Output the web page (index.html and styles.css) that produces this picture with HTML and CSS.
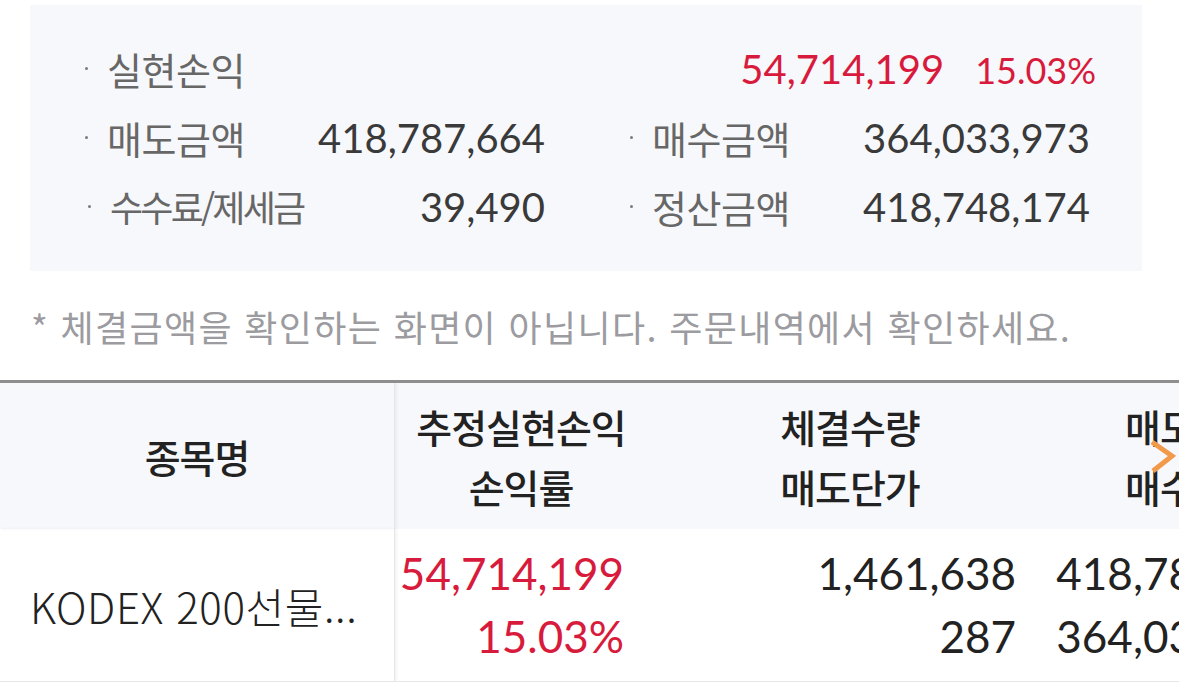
FILE: index.html
```html
<!DOCTYPE html>
<html lang="ko">
<head>
<meta charset="utf-8">
<title>실현손익</title>
<link rel="stylesheet" href="styles.css">
</head>
<body>
<section class="summary">
  <div class="row top">
    <div class="label"><span class="dot"></span>실현손익</div>
    <div class="vals"><span class="num red">54,714,199</span><span class="pct red">15.03%</span></div>
  </div>
  <div class="grid">
    <div class="cell"><div class="label"><span class="dot"></span>매도금액</div><div class="num">418,787,664</div></div>
    <div class="cell"><div class="label"><span class="dot"></span>매수금액</div><div class="num">364,033,973</div></div>
    <div class="cell"><div class="label shift"><span class="dot"></span>수수료/제세금</div><div class="num">39,490</div></div>
    <div class="cell"><div class="label"><span class="dot"></span>정산금액</div><div class="num">418,748,174</div></div>
  </div>
</section>
<p class="note">* 체결금액을 확인하는 화면이 아닙니다. 주문내역에서 확인하세요.</p>
<div class="table">
  <div class="th c1"><span>종목명</span></div>
  <div class="th c2"><span>추정실현손익</span><span>손익률</span></div>
  <div class="th c3"><span>체결수량</span><span>매도단가</span></div>
  <div class="th c4"><span>매도금액</span><span>매수금액</span></div>
  <div class="td c1 name">KODEX 200선물...</div>
  <div class="td c2 red"><span>54,714,199</span><span>15.03%</span></div>
  <div class="td c3"><span>1,461,638</span><span>287</span></div>
  <div class="td c4"><span>418,787,664</span><span>364,033,973</span></div>
  <svg class="more" width="30" height="38" viewBox="0 0 30 38"><polyline points="6,4 26,18 7,33" fill="none" stroke="#f29a4c" stroke-width="5"/></svg>
</div>
</body>
</html>
```
FILE: styles.css
```css
body {
  margin: 0;
  background: #fff;
  font-family: "Noto Sans CJK KR", sans-serif;
  width: 1179px;
  overflow: hidden;
}
.summary {
  margin: 5px 37px 0 30px;
  background: #f7f8fb;
  padding: 29px 52px 30px 55px;
}
.row, .cell {
  height: 69px;
  display: flex;
  align-items: center;
  justify-content: space-between;
}
.top { margin-right: -6px; }
.grid {
  display: grid;
  grid-template-columns: 1fr 1fr;
  column-gap: 85px;
}
.label {
  display: flex;
  align-items: center;
  font-size: 38px;
  letter-spacing: -0.5px;
  line-height: 1.2;
  color: #676767;
}
.label.shift { padding-left: 3px; font-size: 36px; letter-spacing: -2.8px; }
.dot {
  width: 3px;
  height: 3px;
  border-radius: 50%;
  background: #7a7a7a;
  margin-right: 19px;
}
.num {
  font-family: Lato, sans-serif;
  font-size: 40px;
  line-height: 1.2;
  color: #3a3a3a;
}
.vals { display: flex; align-items: baseline; }
.pct {
  font-family: Lato, sans-serif;
  font-size: 36px;
  margin-left: 31px;
}
.red { color: #d81b3c; }
.note {
  margin: 0 0 29px;
  padding: 30px 0 0 31px;
  line-height: 50px;
  font-size: 36px;
  letter-spacing: 1.35px;
  color: #9b9ba0;
}
.table {
  position: relative;
  display: grid;
  grid-template-columns: 395px 252px 388px 287px;
  width: 1179px;
  overflow: hidden;
  border-top: 3px solid #8e8e8e;
  border-bottom: 1px solid #e6e6e6;
}
.th {
  height: 146px;
  background: #f7f8fb;
  display: flex;
  flex-direction: column;
  justify-content: center;
  align-items: center;
  font-size: 39px;
  letter-spacing: -1px;
  font-weight: 500;
  line-height: 60px;
  color: #222;
}
.td {
  height: 152px;
  display: flex;
  flex-direction: column;
  justify-content: center;
  align-items: flex-end;
  font-family: Lato, sans-serif;
  font-size: 44px;
  line-height: 63px;
  color: #222;
}
.td.red { color: #d81b3c; }
.c1 {
  border-right: 1px solid #e6e6e6;
  box-shadow: 2px 0 3px rgba(0, 0, 0, 0.05);
  position: relative;
  z-index: 1;
}
.th.c3 { padding-left: 18px; }
.th.c4 { align-items: flex-start; padding-left: 90px; }
.td.c2 { padding-right: 23px; }
.td.c3 { padding-right: 19px; }
.td.c4 { padding-right: 16px; }
.name {
  align-items: flex-start;
  padding-left: 30px;
  font-family: "Noto Sans CJK KR", sans-serif;
  font-weight: 300;
  font-size: 42px;
  letter-spacing: 0.6px;
}
.more {
  position: absolute;
  left: 1146px;
  top: 55px;
  z-index: 2;
}
```
